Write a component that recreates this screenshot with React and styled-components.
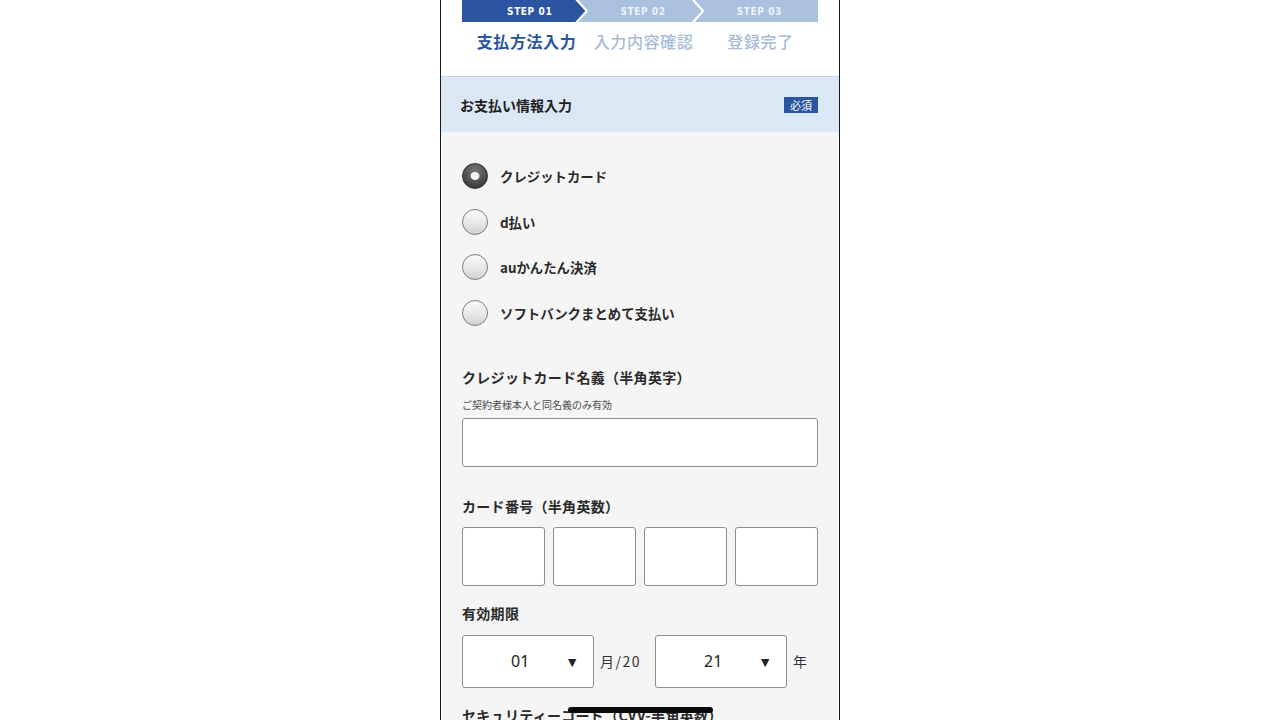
import { styled, createGlobalStyle } from "styled-components";

const GlobalStyle = createGlobalStyle`
  html, body {
    margin: 0;
    padding: 0;
    background: #ffffff;
    font-family: "Noto Sans CJK JP", "Noto Sans", sans-serif;
    overflow: hidden;
  }
`;

const steps = [
  { no: "STEP 01", label: "支払方法入力" },
  { no: "STEP 02", label: "入力内容確認" },
  { no: "STEP 03", label: "登録完了" },
];

const methods = [
  "クレジットカード",
  "d払い",
  "auかんたん決済",
  "ソフトバンクまとめて支払い",
];

const App = () => {
  return (
    <>
      <GlobalStyle />
      <Phone>
        <TopArea>
          <StepBar>
            {steps.map((s, i) => (
              <Step key={s.no} $index={i} $active={i === 0} $last={i === steps.length - 1}>
                {s.no}
              </Step>
            ))}
          </StepBar>
          <StepLabels>
            {steps.map((s, i) => (
              <StepLabel key={s.label} $active={i === 0}>
                {s.label}
              </StepLabel>
            ))}
          </StepLabels>
        </TopArea>

        <SectionHead>
          <SectionTitle>お支払い情報入力</SectionTitle>
          <Badge>必須</Badge>
        </SectionHead>

        <Body>
          <RadioList>
            {methods.map((m, i) => (
              <RadioRow key={m}>
                <Radio $checked={i === 0} />
                <RadioText>{m}</RadioText>
              </RadioRow>
            ))}
          </RadioList>

          <Field $top={41}>
            <FieldTitle>クレジットカード名義（半角英字）</FieldTitle>
            <Note>ご契約者様本人と同名義のみ有効</Note>
            <TextBox />
          </Field>

          <Field $top={29}>
            <FieldTitle>カード番号（半角英数）</FieldTitle>
            <CardRow>
              <CardBox />
              <CardBox />
              <CardBox />
              <CardBox />
            </CardRow>
          </Field>

          <Field $top={17}>
            <FieldTitle>有効期限</FieldTitle>
            <ExpiryRow>
              <SelectBox>
                <span>01</span>
                <Caret>▼</Caret>
              </SelectBox>
              <Unit>月/20</Unit>
              <SelectBox>
                <span>21</span>
                <Caret>▼</Caret>
              </SelectBox>
              <Unit>年</Unit>
            </ExpiryRow>
          </Field>

          <Field $top={17}>
            <FieldTitle>セキュリティーコード（CVV-半角英数）</FieldTitle>
          </Field>
        </Body>

        <HomeIndicator />
      </Phone>
    </>
  );
};

export default App;

const Phone = styled.div`
  position: relative;
  width: 398px;
  height: 720px;
  margin: 0 auto;
  border-left: 1px solid #1a1a1a;
  border-right: 1px solid #1a1a1a;
  background: #f5f5f5;
  overflow: hidden;
`;

const TopArea = styled.div`
  background: #ffffff;
  height: 76px;
  padding: 0 20px 0 21px;
  border-bottom: 1px solid #c6d3ea;
`;

const StepBar = styled.div`
  display: flex;
  height: 22px;
`;

const Step = styled.div`
  flex: 0 0 123.33px;
  margin-left: ${(p) => (p.$index === 0 ? "0" : "-7px")};
  display: flex;
  align-items: center;
  justify-content: center;
  padding-left: ${(p) => (p.$index === 0 ? "12px" : "6px")};
  box-sizing: border-box;
  background: ${(p) => (p.$active ? "#2b55a0" : "#a9c0df")};
  color: ${(p) => (p.$active ? "#ffffff" : "#eef3fa")};
  font-family: "DejaVu Sans Condensed", "DejaVu Sans", sans-serif;
  font-weight: bold;
  font-size: 10px;
  letter-spacing: 0.6px;
  clip-path: ${(p) =>
    p.$index === 0
      ? "polygon(0 0, calc(100% - 10px) 0, 100% 50%, calc(100% - 10px) 100%, 0 100%)"
      : p.$last
      ? "polygon(0 0, 100% 0, 100% 100%, 0 100%, 10px 50%)"
      : "polygon(0 0, calc(100% - 10px) 0, 100% 50%, calc(100% - 10px) 100%, 0 100%, 10px 50%)"};
`;

const StepLabels = styled.div`
  display: grid;
  grid-template-columns: 1fr 1fr 1fr;
  margin-top: 8px;
  padding-left: 6px;
`;

const StepLabel = styled.div`
  text-align: center;
  font-size: 16px;
  line-height: 22px;
  font-weight: ${(p) => (p.$active ? 700 : 500)};
  color: ${(p) => (p.$active ? "#2b55a0" : "#a7bbd8")};
  letter-spacing: 0.6px;
`;

const SectionHead = styled.div`
  height: 55px;
  background: #dce7f5;
  display: flex;
  align-items: center;
  justify-content: space-between;
  padding: 0 21px 0 19px;
`;

const SectionTitle = styled.div`
  font-size: 14px;
  font-weight: 700;
  color: #1e1e1e;
`;

const Badge = styled.div`
  background: #2b55a0;
  color: #ffffff;
  font-size: 11px;
  line-height: 16px;
  padding: 0 6px;
`;

const Body = styled.div`
  padding: 31px 21px 0 21px;
`;

const RadioList = styled.div`
  display: flex;
  flex-direction: column;
  gap: 19.6px;
`;

const RadioRow = styled.div`
  display: flex;
  align-items: center;
  gap: 12px;
  height: 26px;
`;

const Radio = styled.span`
  position: relative;
  width: 26px;
  height: 26px;
  box-sizing: border-box;
  border-radius: 50%;
  border: 1px solid ${(p) => (p.$checked ? "#2f2f2f" : "#7d7d7d")};
  background: ${(p) =>
    p.$checked
      ? "radial-gradient(circle at 50% 30%, #7a7a7a 0%, #4a4a4a 60%, #2e2e2e 100%)"
      : "linear-gradient(180deg, #fafafa 0%, #e6e6e6 60%, #cfcfcf 100%)"};

  &::after {
    content: "";
    display: ${(p) => (p.$checked ? "block" : "none")};
    position: absolute;
    left: 50%;
    top: 50%;
    width: 9px;
    height: 8px;
    transform: translate(-50%, -50%);
    border-radius: 50%;
    background: #f4f4f4;
  }
`;

const RadioText = styled.span`
  font-size: 13.4px;
  font-weight: 700;
  color: #2a2a2a;
`;

const Field = styled.div`
  margin-top: ${(p) => p.$top}px;
`;

const FieldTitle = styled.div`
  font-size: 14px;
  line-height: 20px;
  font-weight: 700;
  color: #2a2a2a;
  letter-spacing: 0.3px;
`;

const Note = styled.div`
  font-size: 10px;
  line-height: 14px;
  color: #4a4a4a;
  margin-top: 11px;
`;

const TextBox = styled.div`
  margin-top: 6px;
  height: 49px;
  box-sizing: border-box;
  border: 1px solid #8e8e8e;
  border-radius: 3px;
  background: #ffffff;
`;

const CardRow = styled.div`
  display: grid;
  grid-template-columns: repeat(4, 1fr);
  gap: 8px;
  margin-top: 11px;
`;

const CardBox = styled.div`
  height: 59px;
  box-sizing: border-box;
  border: 1px solid #8e8e8e;
  border-radius: 3px;
  background: #ffffff;
`;

const ExpiryRow = styled.div`
  display: flex;
  align-items: center;
  margin-top: 12px;
`;

const SelectBox = styled.div`
  flex: 0 0 132px;
  height: 53px;
  box-sizing: border-box;
  border: 1px solid #8e8e8e;
  border-radius: 3px;
  background: #ffffff;
  display: flex;
  align-items: center;
  justify-content: space-between;
  padding: 0 14px 0 48px;
  font-size: 16px;
  color: #222222;
  font-family: "Noto Sans", sans-serif;
`;

const Caret = styled.span`
  font-size: 14px;
  color: #222222;
`;

const Unit = styled.span`
  flex: 0 0 auto;
  font-size: 14px;
  color: #333333;
  margin: 0 14px 0 6px;
  letter-spacing: 1.5px;
`;

const HomeIndicator = styled.div`
  position: absolute;
  left: 127px;
  top: 707px;
  width: 145px;
  height: 6px;
  border-radius: 3px;
  background: #0a0a0a;
`;
